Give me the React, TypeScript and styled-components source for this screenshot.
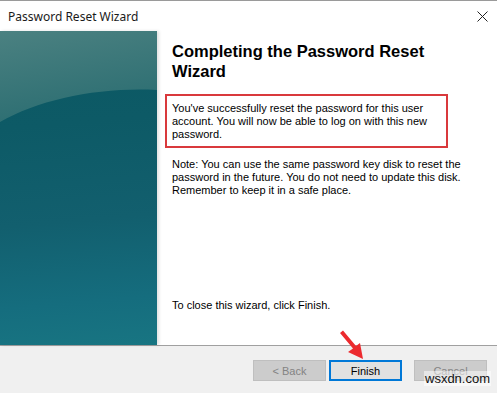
import React from "react";
import styled, { createGlobalStyle } from "styled-components";

const Global = createGlobalStyle`
  html, body { margin: 0; padding: 0; background: #fff; }
  #root { width: 497px; height: 393px; }
`;

const Window = styled.div`
  position: relative;
  width: 497px;
  height: 393px;
  display: flex;
  flex-direction: column;
  background: #fff;
  overflow: hidden;
  font-family: "Liberation Sans", Arial, sans-serif;
`;

const TitleBar = styled.div`
  height: 30px;
  border-top: 1px solid #9a9a9a;
  display: flex;
  align-items: center;
  justify-content: space-between;
  padding: 0 9px 0 8px;
  font-family: "Noto Sans", "Open Sans", sans-serif;
  font-size: 12px;
  color: #1a1a1a;
  flex: none;
`;

const Body = styled.div`
  flex: none;
  height: 314px;
  display: flex;
`;

const Sidebar = styled.div`
  width: 157px;
  flex: none;
  position: relative;
  background: linear-gradient(175deg, #0b5862 0%, #0d5a66 30%, #125f6e 60%, #156d7e 85%, #187582 100%);
  overflow: hidden;
  box-shadow: 2px 0 3px rgba(0, 0, 0, 0.12);
`;

const Content = styled.div`
  flex: 1;
  padding: 10px 0 0 15px;
  display: flex;
  flex-direction: column;
`;

const Heading = styled.h1`
  margin: 0;
  font-size: 16.5px;
  line-height: 20px;
  font-weight: bold;
  color: #000;
  width: 280px;
`;

const Para = styled.p<{ $boxed?: boolean }>`
  margin: ${(p) => (p.$boxed ? "13px 0 0 -7px" : "10px 0 0 0")};
  padding: ${(p) => (p.$boxed ? "6px 0 5px 5px" : "0")};
  width: ${(p) => (p.$boxed ? "274px" : "292px")};
  border: ${(p) => (p.$boxed ? "2px solid #d9393c" : "none")};
  font-size: 11px;
  line-height: 13px;
  color: #000;
`;

const Spacer = styled.div`
  flex: 1;
`;

const Closing = styled.p`
  margin: 0 0 33px 0;
  font-size: 11px;
  line-height: 13px;
`;

const Footer = styled.div`
  flex: 1;
  border-top: 1px solid #a0a0a0;
  background: #f0f0f0;
  display: flex;
  align-items: flex-start;
  padding: 14px 0 0 253px;
  gap: 3px;
`;

const Button = styled.button<{ $default?: boolean; $disabled?: boolean; $gapLeft?: number }>`
  width: 73px;
  height: 21px;
  margin-left: ${(p) => p.$gapLeft ?? 0}px;
  box-sizing: border-box;
  border: ${(p) => (p.$default ? "2px solid #0078d7" : "1px solid #bfbfbf")};
  background: ${(p) => (p.$disabled ? "#cccccc" : "#e1e1e1")};
  color: ${(p) => (p.$disabled ? "#838383" : "#000")};
  font-family: "Liberation Sans", Arial, sans-serif;
  font-size: 11px;
  padding: 0;
`;

const Watermark = styled.span`
  position: absolute;
  left: 424px;
  top: 371px;
  font-family: "Liberation Sans", Arial, sans-serif;
  font-size: 13px;
  color: #111;
  background: rgba(255, 255, 255, 0.5);
  padding: 0 1px;
  line-height: 15px;
`;

const Overlay = styled.svg`
  position: absolute;
  left: 0;
  top: 0;
  pointer-events: none;
`;

export default function App() {
  return (
    <>
      <Global />
      <Window>
        <TitleBar>
          <span>Password Reset Wizard</span>
          <svg width="11" height="11" viewBox="0 0 11 11">
            <path d="M0.5 0.5 L10.5 10.5 M10.5 0.5 L0.5 10.5" stroke="#222" strokeWidth="1" />
          </svg>
        </TitleBar>
        <Body>
          <Sidebar>
            <svg width="157" height="314" viewBox="0 0 157 314" style={{ position: "absolute", left: 0, top: 0 }}>
              <defs>
                <linearGradient id="g1" x1="0" y1="0" x2="0.3" y2="1">
                  <stop offset="0" stopColor="#4b8181" />
                  <stop offset="1" stopColor="#2c6e72" />
                </linearGradient>
              </defs>
              <path d="M0 0 H157 V59 C100 56 40 68 0 91 Z" fill="url(#g1)" />
            </svg>
          </Sidebar>
          <Content>
            <Heading>Completing the Password Reset Wizard</Heading>
            <Para $boxed>
              You've successfully reset the password for this user account. You will now be able to log on with this
              new password.
            </Para>
            <Para>
              Note: You can use the same password key disk to reset the password in the future. You do not need to
              update this disk. Remember to keep it in a safe place.
            </Para>
            <Spacer />
            <Closing>To close this wizard, click Finish.</Closing>
          </Content>
        </Body>
        <Footer>
          <Button $disabled>&lt; Back</Button>
          <Button $default>Finish</Button>
          <Button $disabled $gapLeft={9}>Cancel</Button>
        </Footer>
        <Watermark>wsxdn.com</Watermark>
        <Overlay width="497" height="393" viewBox="0 0 497 393">
          <path d="M340 333 L353 348.5 L348 352 L363 359 L360 343 L356 346 L343 330.5 Z" fill="#ec2a2e" />
        </Overlay>
      </Window>
    </>
  );
}
